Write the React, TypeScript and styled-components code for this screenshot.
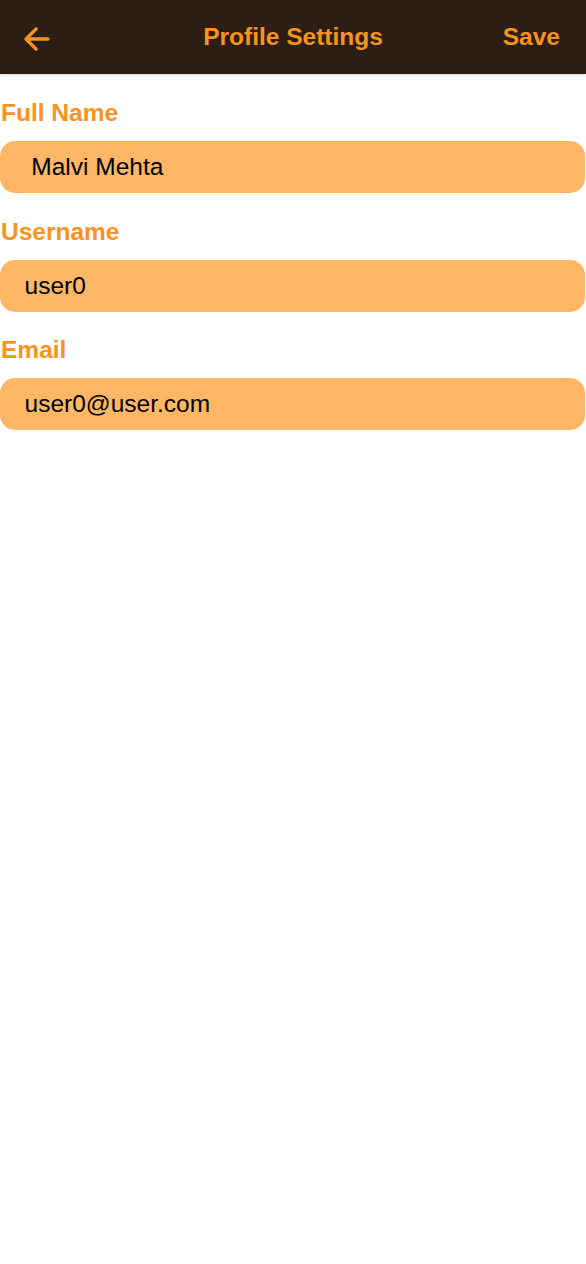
import React from "react";
import styled, { createGlobalStyle } from "styled-components";

const GlobalStyle = createGlobalStyle`
  html, body {
    margin: 0;
    padding: 0;
    background: #ffffff;
  }
  body {
    font-family: "Liberation Sans", Arial, Helvetica, sans-serif;
  }
  * { box-sizing: border-box; }
`;

const Page = styled.div`
  width: 586px;
  min-height: 1264px;
  background: #ffffff;
  display: flex;
  flex-direction: column;
`;

const Header = styled.header`
  height: 74px;
  background: #2b1e14;
  display: grid;
  grid-template-columns: 1fr auto 1fr;
  align-items: center;
  padding: 0 26px;
  box-shadow: 0 1px 3px rgba(0, 0, 0, 0.18);
  position: relative;
  z-index: 1;
`;

const BackButton = styled.button`
  justify-self: start;
  width: 36px;
  height: 36px;
  margin: 4px 0 0 -7px;
  padding: 0;
  border: none;
  background: transparent;
  display: flex;
  align-items: center;
  justify-content: center;
  cursor: pointer;
`;

const Title = styled.h1`
  margin: 0;
  font-size: 24.5px;
  font-weight: 700;
  color: #f7931e;
  text-align: center;
`;

const SaveButton = styled.button`
  justify-self: end;
  padding: 0;
  border: none;
  background: transparent;
  font-family: inherit;
  font-size: 24.5px;
  font-weight: 700;
  color: #f7931e;
  cursor: pointer;
  line-height: normal;
`;

const Form = styled.form`
  display: flex;
  flex-direction: column;
  gap: 24.5px;
  padding: 25px 0 0 0;
`;

const Field = styled.div`
  display: flex;
  flex-direction: column;
  gap: 14px;
`;

const Label = styled.label`
  font-size: 24.5px;
  font-weight: 700;
  color: #f7931e;
  line-height: 28px;
  padding-left: 1px;
`;

const Input = styled.input`
  width: 584.5px;
  height: 52px;
  border: none;
  outline: none;
  border-radius: 15px;
  background: #ffb766;
  padding: 0 24px 0 24.5px;
  font-family: "Liberation Sans", Arial, Helvetica, sans-serif;
  font-size: 24.5px;
  color: #000000;
`;

const BackIcon = () => (
  <svg width="36" height="36" viewBox="0 0 512 512" aria-hidden="true">
    <path
      d="M244 400L100 256l144-144M120 256h292"
      fill="none"
      stroke="#f7931e"
      strokeWidth="48"
      strokeLinecap="round"
      strokeLinejoin="round"
    />
  </svg>
);

const fields = [
  { id: "fullName", label: "Full Name", value: " Malvi Mehta" },
  { id: "username", label: "Username", value: "user0" },
  { id: "email", label: "Email", value: "user0@user.com" },
];

export default function App() {
  return (
    <>
      <GlobalStyle />
      <Page>
        <Header>
          <BackButton type="button" aria-label="Back">
            <BackIcon />
          </BackButton>
          <Title>Profile Settings</Title>
          <SaveButton type="button">Save</SaveButton>
        </Header>
        <Form onSubmit={(e) => e.preventDefault()}>
          {fields.map((f) => (
            <Field key={f.id}>
              <Label htmlFor={f.id}>{f.label}</Label>
              <Input id={f.id} defaultValue={f.value} />
            </Field>
          ))}
        </Form>
      </Page>
    </>
  );
}
